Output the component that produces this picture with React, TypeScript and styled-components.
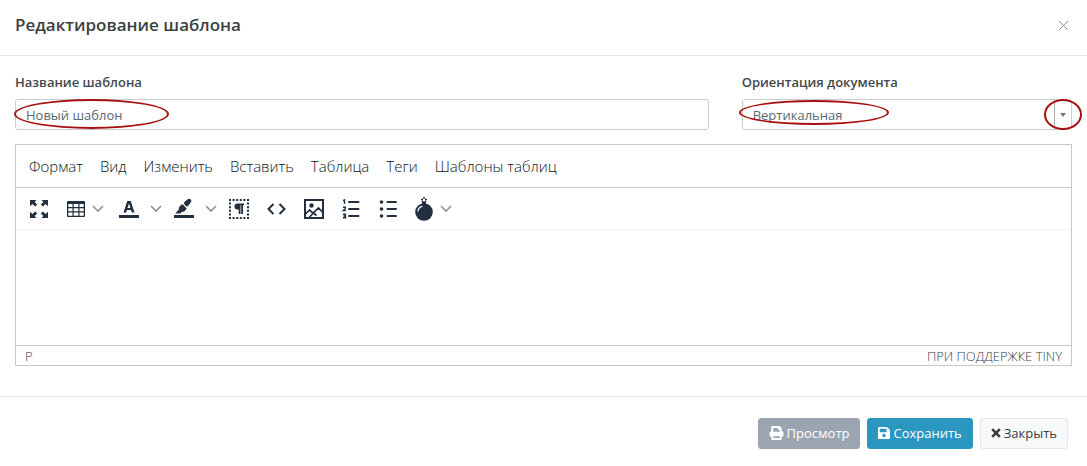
import React from "react";
import styled, { createGlobalStyle } from "styled-components";

const GlobalStyle = createGlobalStyle`
  *, *::before, *::after { box-sizing: border-box; }
  body {
    margin: 0;
    background: #fff;
    color: #3f4347;
    font: 13px/20px "Open Sans", "Noto Sans", sans-serif;
  }
  button, input, select, textarea { font: inherit; color: inherit; margin: 0; }
`;

const Dialog = styled.form`
  display: flex;
  flex-direction: column;
`;

const Header = styled.header`
  display: flex;
  align-items: center;
  justify-content: space-between;
  padding: 13px 18px 18px 15px;
  border-bottom: 1px solid #e7e7e7;
`;

const Title = styled.h1`
  margin: 0;
  font-size: 17px;
  line-height: 24px;
  font-weight: 600;
  color: #3c3f41;
`;

const CloseButton = styled.button`
  display: flex;
  padding: 0;
  border: 0;
  background: none;
  color: #8f8f8f;
  cursor: pointer;
`;

const Body = styled.div`
  padding: 16px 15px 30px;
`;

const Fields = styled.div`
  display: grid;
  grid-template-columns: 21fr 10fr;
  column-gap: 33px;
  margin-bottom: 14px;
`;

const Label = styled.label`
  display: block;
  margin-bottom: 7px;
  font-weight: 600;
  color: #44484b;
`;

const Control = styled.div`
  position: relative;
`;

const TextInput = styled.input`
  display: block;
  width: 100%;
  height: 31px;
  padding: 0 10px;
  border: 1px solid #cbcccd;
  border-radius: 3px;
  background: #fff;
  color: #5c6873;
  outline: 0;
`;

const SelectBox = styled.div`
  display: flex;
  height: 31px;
  border: 1px solid #cbcccd;
  border-radius: 3px;
`;

const Select = styled.select`
  flex: 1;
  min-width: 0;
  padding: 0 10px;
  border: 0;
  background: transparent;
  color: #5c6873;
  appearance: none;
  outline: 0;
`;

const Arrow = styled.span`
  display: flex;
  align-items: center;
  justify-content: center;
  width: 17px;
  border-left: 1px solid #aaa;
  color: #777;
`;

const Mark = styled.span<{ $left?: number; $right?: number; $top: number; $width: number; $height: number }>`
  position: absolute;
  top: ${(p) => p.$top}px;
  ${(p) => (p.$right !== undefined ? `right: ${p.$right}px;` : `left: ${p.$left}px;`)}
  width: ${(p) => p.$width}px;
  height: ${(p) => p.$height}px;
  border: 2px solid #a81010;
  border-radius: 50%;
  pointer-events: none;
`;

const Editor = styled.section`
  display: flex;
  flex-direction: column;
  border: 1px solid #c8c8c8;
  color: #222f3e;
`;

const MenuBar = styled.nav`
  display: flex;
  flex-wrap: wrap;
  gap: 1px;
  padding: 8px 5px;
  border-bottom: 1px solid #c8c8c8;
`;

const MenuItem = styled.button`
  padding: 0 8px;
  border: 0;
  background: none;
  font-size: 15px;
  font-weight: 300;
  line-height: 26px;
  color: #0c1622;
  cursor: pointer;
`;

const Toolbar = styled.div`
  display: flex;
  flex-wrap: wrap;
  align-items: center;
  padding: 0 5px;
  border-bottom: 1px solid #f1f1f1;
`;

const Tool = styled.button<{ $split?: "narrow" | "wide" }>`
  display: flex;
  align-items: center;
  gap: ${(p) => (p.$split === "wide" ? 9 : 4)}px;
  padding: 9px ${(p) => (p.$split === "wide" ? 3 : 6)}px 8px 6px;
  border: 0;
  background: none;
  color: #222f3e;
  cursor: pointer;
  & + & { margin-left: 1px; }
`;

const Content = styled.textarea`
  display: block;
  width: 100%;
  height: 115px;
  padding: 12px;
  border: 0;
  resize: none;
  outline: 0;
`;

const StatusBar = styled.footer`
  display: flex;
  justify-content: space-between;
  padding: 1px 9px 0;
  border-top: 1px solid #c8c8c8;
  font-weight: 300;
  line-height: 18px;
  color: #323e4c;
`;

const StatusLink = styled.a`
  color: inherit;
  text-decoration: none;
`;

const Footer = styled.footer`
  display: flex;
  justify-content: flex-end;
  gap: 7px;
  padding: 21px 19px 17px;
  border-top: 1px solid #e7e7e7;
`;

const tones = {
  muted: ["#9ba5b1", "#9ba5b1", "#fff"],
  primary: ["#2b96bf", "#2b96bf", "#fff"],
  light: ["#f8f9fa", "#e4e6e8", "#3a3d40"],
};

const Action = styled.button<{ $tone: keyof typeof tones }>`
  display: flex;
  align-items: center;
  gap: 3px;
  height: 31px;
  padding: 0 10px 2px;
  border: 1px solid ${(p) => tones[p.$tone][1]};
  border-radius: 3px;
  background: ${(p) => tones[p.$tone][0]};
  color: ${(p) => tones[p.$tone][2]};
  cursor: pointer;
`;

const Icon = ({ children }: { children: React.ReactNode }) => (
  <svg width="24" height="24" viewBox="0 0 24 24" fill="currentColor" aria-hidden="true">
    {children}
  </svg>
);

const Chevron = () => (
  <svg width="12" height="24" viewBox="0 0 12 24" fill="none" stroke="#8a929b" strokeWidth="1.6" aria-hidden="true">
    <path d="M1 9l5 5 5-5" />
  </svg>
);

const FullscreenIcon = () => (
  <Icon>
    <path d="M3 3h6.500L7.600 5l2.600 2.600-2 2L5.400 7 3 9.300zM21 3h-6.500l1.900 2-2.600 2.600 2 2L18.600 7 21 9.300zM3 21h6.500l-1.900-2 2.600-2.600-2-2L5.400 17 3 14.700zM21 21h-6.500l1.900-2-2.600-2.600 2-2 2.800 2.600 2.400-2.300z" />
  </Icon>
);

const TableIcon = () => (
  <Icon>
    <path
      fillRule="evenodd"
      d="M4 4h16a1 1 0 011 1v14a1 1 0 01-1 1H4a1 1 0 01-1-1V5a1 1 0 011-1zm.3 3v3h4.200V7zm5.400 0v3h4.600V7zm5.800 0v3h4.200V7zM4.300 11.200v3h4.200v-3zm5.400 0v3h4.600v-3zm5.800 0v3h4.200v-3zM4.300 15.400v3.300h4.200v-3.300zm5.400 0v3.300h4.600v-3.300zm5.800 0v3.300h4.200v-3.300z"
    />
  </Icon>
);

const TextColorIcon = () => (
  <Icon>
    <path d="M2 18h20v3H2z" />
    <path d="M10.300 4h3.400L17.500 15.500h-2.700l-.8-2.400H10l-.8 2.400H6.500zm.2 6.900h3L12 6.400z" fillRule="evenodd" />
  </Icon>
);

const HighlightIcon = () => (
  <Icon>
    <path d="M2 18h20v3H2z" />
    <path d="M12.700 4.700l3.100-2.400c1-.7 2.200-.5 2.900.3.800.9.900 1.800.2 2.700l-2.700 3.500c-.7.800-1.500.9-2.300.2l-1.300-1.400c-.8-.8-.8-1.900.1-2.900zM10.600 7.200l4 4c-.6 2.400-2.600 3.700-5 3.800L8.400 16.500H3.200l3.500-3.800c0-2.700 1.500-4.900 3.900-5.500z" />
  </Icon>
);

const BlocksIcon = () => (
  <Icon>
    <path
      d="M3 2v20M21 2v20M2 3h20M2 21h20"
      fill="none"
      stroke="currentColor"
      strokeWidth="2"
      strokeDasharray="2 1.600"
    />
    <path d="M10.500 6.500H17v1.800h-1V17h-1.800V8.300h-.7V17h-1.800v-4.400h-1.200a3 3 0 010-6.100z" />
  </Icon>
);

const CodeIcon = () => (
  <Icon>
    <path d="M9.500 7l-5 5 5 5M15.500 7l5 5-5 5" fill="none" stroke="currentColor" strokeWidth="2" />
  </Icon>
);

const ImageIcon = () => (
  <Icon>
    <path d="M4 3h18v18H4z" fill="none" stroke="currentColor" strokeWidth="2" />
    <circle cx="10.500" cy="8.500" r="2.200" />
    <path d="M4.500 17l4-4 3.500 3.200L17.500 11l4 4M8.500 20l4-4 3 2.500" fill="none" stroke="currentColor" strokeWidth="1.700" />
  </Icon>
);

const NumberedIcon = () => (
  <Icon>
    <path d="M11 5h9.500M11 12h9.500M11 19h9.500" stroke="currentColor" strokeWidth="2" strokeLinecap="round" />
    <path
      d="M5 3.600l1.500-.8v4.200M5 10.200h2.400v1.500L5.300 13.600h2.500M5 17.300h2.500v3.400H5m.5-1.700h2"
      fill="none"
      stroke="currentColor"
      strokeWidth="1.400"
    />
  </Icon>
);

const BulletIcon = () => (
  <Icon>
    <path d="M12.500 5H21M12.500 12H21M12.500 19H21" stroke="currentColor" strokeWidth="2" strokeLinecap="round" />
    <circle cx="6.500" cy="5" r="1.800" />
    <circle cx="6.500" cy="12" r="1.800" />
    <circle cx="6.500" cy="19" r="1.800" />
  </Icon>
);

const BombIcon = () => (
  <Icon>
    <path d="M10 4.500h4v3h-4z" />
    <circle cx="12" cy="15" r="8.800" />
    <path d="M6 14c.3-2.500 1.700-4.100 4-4.700" fill="none" stroke="#fff" strokeWidth="1.200" strokeLinecap="round" />
    <path d="M12 0v2M9 2.500h2M13 2.500h2M10 5l1-1M14 5l-1-1" stroke="currentColor" strokeWidth="1.500" />
  </Icon>
);

const PrintIcon = () => (
  <svg width="15" height="14" viewBox="-20 0 552 512" fill="currentColor" aria-hidden="true">
    <path
      fillRule="evenodd"
      d="M96 0h275l77 77v115c35 0 64 29 64 64v112c0 9-7 16-16 16h-48v96c0 18-14 32-32 32H96c-18 0-32-14-32-32v-96H16c-9 0-16-7-16-16V256c0-35 29-64 64-64V32C64 14 78 0 96 0zm40 76v130h240V136h-70V76zm0 304v60h240v-60z"
    />
  </svg>
);

const SaveIcon = () => (
  <svg width="12" height="14" viewBox="0 0 448 512" fill="currentColor" aria-hidden="true">
    <path d="M433.900 129.900l-83.900-83.900A48 48 0 00316.100 32H48C21.500 32 0 53.500 0 80v352c0 26.500 21.500 48 48 48h352c26.500 0 48-21.500 48-48V163.900a48 48 0 00-14.100-34zM224 416c-35.300 0-64-28.700-64-64s28.700-64 64-64 64 28.700 64 64-28.700 64-64 64zm96-304.500V212c0 6.600-5.400 12-12 12H76c-6.600 0-12-5.400-12-12V108c0-6.600 5.400-12 12-12h228.500c3.200 0 6.200 1.300 8.500 3.500l3.500 3.500a12 12 0 013.500 8.500z" />
  </svg>
);

const CrossIcon = () => (
  <svg width="10" height="14" viewBox="0 0 10 14" fill="none" stroke="currentColor" strokeWidth="2.600" aria-hidden="true">
    <path d="M1.200 3.200l7.600 7.600M8.800 3.200l-7.600 7.600" />
  </svg>
);

const menus = ["Формат", "Вид", "Изменить", "Вставить", "Таблица", "Теги", "Шаблоны таблиц"];

type ToolDef = { name: string; icon: React.FC; split?: "narrow" | "wide" };

const tools: ToolDef[] = [
  { name: "Полноэкранный режим", icon: FullscreenIcon },
  { name: "Таблица", icon: TableIcon, split: "narrow" },
  { name: "Цвет текста", icon: TextColorIcon, split: "wide" },
  { name: "Цвет фона", icon: HighlightIcon, split: "wide" },
  { name: "Показывать блоки", icon: BlocksIcon },
  { name: "Исходный код", icon: CodeIcon },
  { name: "Изображение", icon: ImageIcon },
  { name: "Нумерованный список", icon: NumberedIcon },
  { name: "Маркированный список", icon: BulletIcon },
  { name: "Дополнительно", icon: BombIcon, split: "narrow" },
];

export default function App() {
  return (
    <>
      <GlobalStyle />
      <Dialog onSubmit={(e) => e.preventDefault()}>
        <Header>
          <Title>Редактирование шаблона</Title>
          <CloseButton type="button" aria-label="Закрыть окно">
            <svg width="11" height="11" viewBox="0 0 11 11" stroke="currentColor" strokeWidth="1" aria-hidden="true">
              <path d="M1 1l9 9M10 1l-9 9" />
            </svg>
          </CloseButton>
        </Header>
        <Body>
          <Fields>
            <div>
              <Label htmlFor="name">Название шаблона</Label>
              <Control>
                <TextInput id="name" type="text" defaultValue="Новый шаблон" />
                <Mark $left={-1} $top={0} $width={155} $height={30} />
              </Control>
            </div>
            <div>
              <Label htmlFor="orientation">Ориентация документа</Label>
              <Control>
                <SelectBox>
                  <Select id="orientation" defaultValue="v">
                    <option value="v">Вертикальная</option>
                    <option value="h">Горизонтальная</option>
                  </Select>
                  <Arrow>
                    <svg width="6" height="4" viewBox="0 0 6 4" fill="currentColor" aria-hidden="true">
                      <path d="M0 0h6L3 4z" />
                    </svg>
                  </Arrow>
                </SelectBox>
                <Mark $left={-3} $top={1} $width={150} $height={25} />
                <Mark $right={-10} $top={0} $width={38} $height={31} />
              </Control>
            </div>
          </Fields>
          <Editor>
            <MenuBar>
              {menus.map((m) => (
                <MenuItem key={m} type="button">{m}</MenuItem>
              ))}
            </MenuBar>
            <Toolbar>
              {tools.map(({ name, icon: Glyph, split }) => (
                <Tool key={name} type="button" aria-label={name} $split={split}>
                  <Glyph />
                  {split && <Chevron />}
                </Tool>
              ))}
            </Toolbar>
            <Content aria-label="Текст шаблона" />
            <StatusBar>
              <span>P</span>
              <StatusLink href="#tiny">ПРИ ПОДДЕРЖКЕ TINY</StatusLink>
            </StatusBar>
          </Editor>
        </Body>
        <Footer>
          <Action type="button" $tone="muted"><PrintIcon />Просмотр</Action>
          <Action type="submit" $tone="primary"><SaveIcon />Сохранить</Action>
          <Action type="button" $tone="light"><CrossIcon />Закрыть</Action>
        </Footer>
      </Dialog>
    </>
  );
}
